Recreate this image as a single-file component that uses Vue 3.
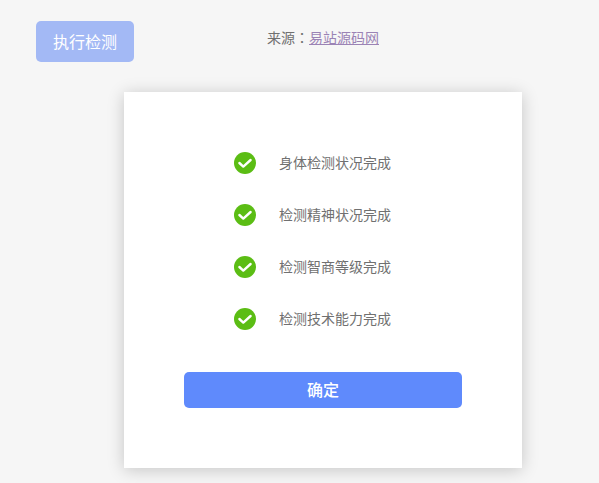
<template>
  <div class="page">
    <!-- Top bar -->
    <div class="top">
      <button class="run">执行检测</button>
      <p class="source">来源<span class="colon">：</span><a href="#" class="link">易站源码网</a></p>
    </div>

    <!-- Result dialog -->
    <div class="dialog">
      <ul class="list">
        <li v-for="item in items" :key="item" class="row">
          <svg class="check" viewBox="0 0 22 22" width="22" height="22">
            <circle cx="11" cy="11" r="11" fill="#5bbd14" />
            <path d="M5.4 11l3.9 3.6 7.3-6.6" fill="none" stroke="#fff" stroke-width="2.4" stroke-linecap="round" stroke-linejoin="round" />
          </svg>
          <span class="text">{{ item }}</span>
        </li>
      </ul>
      <button class="ok">确定</button>
    </div>
  </div>
</template>

<script setup>
const items = ['身体检测状况完成', '检测精神状况完成', '检测智商等级完成', '检测技术能力完成']
</script>

<style>
html, body {
  margin: 0;
  background: #f6f6f6;
}
</style>

<style scoped>
.page {
  height: 483px;
  overflow: hidden;
  font-family: "Liberation Sans", "Noto Sans CJK SC", sans-serif;
  background: #f6f6f6;
}

.top {
  display: flex;
  align-items: flex-start;
  padding: 21px 0 0 36px;
  height: 92px;
  box-sizing: border-box;
}

.run {
  width: 98px;
  height: 41px;
  border: 0;
  border-radius: 5px;
  background: #a3b9f5;
  color: #fff;
  font: inherit;
  font-size: 16px;
  padding: 0 0 2px;
}

.source {
  margin: 7px 0 0 133px;
  font-size: 14px;
  line-height: 18px;
  color: #707070;
}

.colon {
  font-family: "Noto Sans CJK TC", sans-serif;
}

.link {
  color: #9b83b5;
}

.dialog {
  width: 398px;
  height: 376px;
  margin-left: 124px;
  box-sizing: border-box;
  padding: 45px 60px 0;
  background: #fff;
  box-shadow: 0 2px 16px rgba(0, 0, 0, 0.2);
}

.list {
  list-style: none;
  margin: 0;
  padding: 0 0 0 50px;
}

.row {
  display: flex;
  align-items: center;
  gap: 23px;
  height: 52px;
}

.text {
  font-size: 14px;
  line-height: 18px;
  margin-top: -1px;
  color: #707070;
}

.ok {
  display: block;
  width: 278px;
  height: 36px;
  margin-top: 27px;
  border: 0;
  border-radius: 5px;
  background: #5f8afc;
  color: #fff;
  font: inherit;
  font-size: 16px;
  font-weight: 500;
  padding: 0 0 2px;
}
</style>
